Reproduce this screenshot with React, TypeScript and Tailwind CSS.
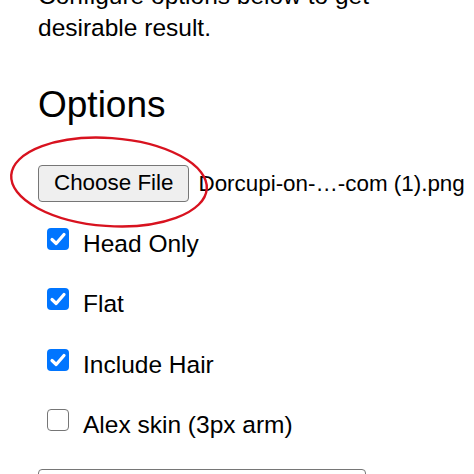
import React from "react"

const options = [
  { label: "Head Only", checked: true },
  { label: "Flat", checked: true },
  { label: "Include Hair", checked: true },
  { label: "Alex skin (3px arm)", checked: false },
]

function Checkbox({ checked }: { checked: boolean }) {
  if (!checked) {
    return <div className="w-[22px] h-[22px] shrink-0 rounded-[4px] border-[1.5px] border-[#767676] bg-white" />
  }
  return (
    <div className="w-[22px] h-[22px] shrink-0 rounded-[4px] bg-[#0075ff] flex items-center justify-center">
      <svg width="22" height="22" viewBox="0 0 22 22">
        <path d="M5 11.5 L9.2 15.5 L17 6.5" fill="none" stroke="white" strokeWidth="3.2" strokeLinecap="round" strokeLinejoin="round" />
      </svg>
    </div>
  )
}

export default function App() {
  return (
    <div
      className="relative w-full h-screen overflow-hidden bg-white text-black pl-[38px]"
      style={{ fontFamily: '"Liberation Sans", Arial, sans-serif' }}
    >
      <p className="mt-[-20.5px] text-[24.5px] leading-[32px] whitespace-nowrap">
        Configure options below to get
        <br />
        desirable result.
      </p>

      <h2 className="mt-[40.5px] text-[37px] leading-[42.5px] font-normal">Options</h2>

      {/* File picker */}
      <div className="mt-[38.5px] flex items-center gap-[9px] whitespace-nowrap">
        <button className="h-[37px] px-[15px] text-[22.4px] leading-none bg-[#efefef] border-[1.5px] border-[#767676] rounded-[4px]">
          Choose File
        </button>
        <span className="text-[22.4px]">Dorcupi-on-…-com (1).png</span>
      </div>

      {/* Checkboxes */}
      <div className="mt-[25.5px] flex flex-col gap-[28.5px]">
        {options.map((o) => (
          <label key={o.label} className="flex items-start h-[32px]">
            <div className="ml-[9px]">
              <Checkbox checked={o.checked} />
            </div>
            <span className="ml-[14px] text-[24.5px] leading-[32px] whitespace-nowrap">{o.label}</span>
          </label>
        ))}
      </div>

      <div className="mt-[27.5px] w-[328px] h-[40px] rounded-[4px] border-[1.5px] border-[#767676]" />

      {/* Annotation */}
      <svg className="absolute inset-0 pointer-events-none" width="474" height="474" viewBox="0 0 474 474">
        <ellipse
          cx="109"
          cy="182"
          rx="98"
          ry="44"
          transform="rotate(4 109 182)"
          fill="none"
          stroke="#d8121f"
          strokeWidth="2.4"
        />
      </svg>
    </div>
  )
}
